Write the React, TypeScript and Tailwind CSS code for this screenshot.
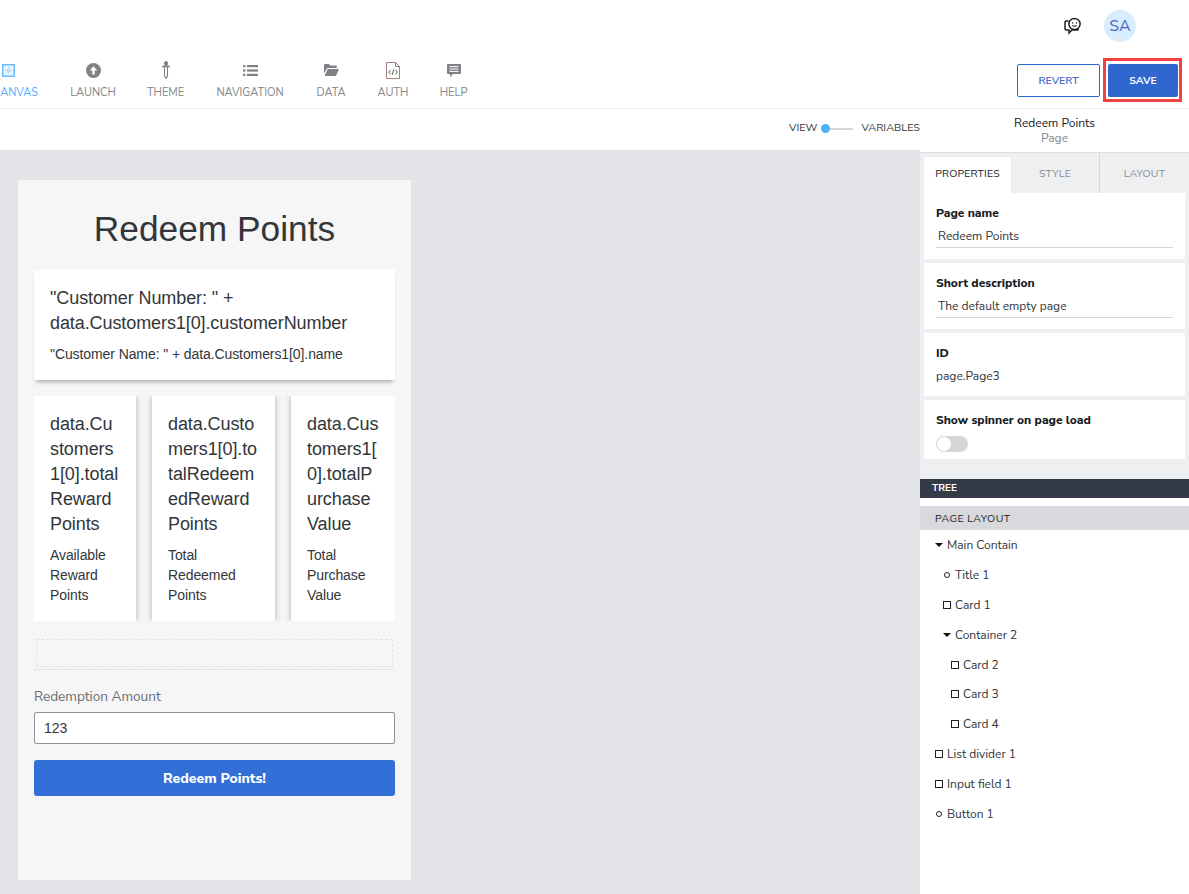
import type { ReactNode } from 'react'

const UI_FONT = "font-['Nunito_Sans','Open_Sans','Noto_Sans',sans-serif]"
const BODY_FONT = "font-['Liberation_Sans',Arial,sans-serif]"

function CanvasIcon() {
  return (
    <svg width="13" height="13" viewBox="0 0 13 13" fill="none" stroke="#6bbcf9">
      <rect x="0.75" y="0.75" width="11.5" height="11.5" strokeWidth="1.5" fill="#eaf6ff" />
      <path d="M6.5 3v1.5M6.5 8.5V10M3 6.5h1.5M8.5 6.5H10M5.5 5.5h2v2h-2z" strokeWidth="1" strokeDasharray="1 1" />
    </svg>
  )
}

function LaunchIcon() {
  return (
    <svg width="15" height="15" viewBox="0 0 16 16">
      <circle cx="8" cy="8" r="8" fill="#808186" />
      <path d="M8 3.5 12 8H9.3v4.2H6.7V8H4z" fill="#fff" />
    </svg>
  )
}

function ThemeIcon() {
  return (
    <svg width="10" height="18" viewBox="0 0 10 18" fill="none" stroke="#808186">
      <rect x="3.5" y="0.5" width="3" height="4" rx="1.5" fill="#808186" />
      <path d="M1 5.5h8" strokeWidth="1.6" />
      <path d="M3.5 6v9l1.5 2.4L6.5 15V6" strokeWidth="1.1" />
    </svg>
  )
}

function NavigationIcon() {
  return (
    <svg width="15" height="11" viewBox="0 0 15 11" fill="#808186">
      <rect x="0" y="0" width="2.4" height="2.2" />
      <rect x="4" y="0" width="11" height="2.2" />
      <rect x="0" y="4.4" width="2.4" height="2.2" />
      <rect x="4" y="4.4" width="11" height="2.2" />
      <rect x="0" y="8.8" width="2.4" height="2.2" />
      <rect x="4" y="8.8" width="11" height="2.2" />
    </svg>
  )
}

function DataIcon() {
  return (
    <svg width="15" height="12" viewBox="0 0 15 12" fill="#808186">
      <path d="M0 1.2C0 .5.5 0 1.2 0h3.6l1.4 1.6h5.6c.6 0 1 .4 1 1V4H3.2L0 9.5z" />
      <path d="M3.7 5H15l-2.7 6.2c-.1.5-.5.8-1 .8H.6z" />
    </svg>
  )
}

function AuthIcon() {
  return (
    <svg width="14" height="17" viewBox="0 0 14 17" fill="none">
      <path d="M.5.5h9l4 4v12H.5z" stroke="#a5807c" />
      <path d="M9.5.5v4h4" stroke="#a5807c" />
      <path d="M4.5 8 2.7 10.2l1.8 2.2M9.5 8l1.8 2.2-1.8 2.2M7.7 7.5l-1.4 5.4" stroke="#5f5f68" />
    </svg>
  )
}

function HelpIcon() {
  return (
    <svg width="14" height="13" viewBox="0 0 14 13">
      <path d="M1 0h12a1 1 0 0 1 1 1v8a1 1 0 0 1-1 1H6l-3 3v-3H1a1 1 0 0 1-1-1V1a1 1 0 0 1 1-1z" fill="#808186" />
      <path d="M2.5 2.6h9M2.5 5h9M2.5 7.4h9" stroke="#fff" strokeWidth="1" />
    </svg>
  )
}

function FeedbackIcon() {
  return (
    <svg width="18" height="18" viewBox="0 0 18 18" fill="none" stroke="#1f2026" strokeWidth="1.5">
      <circle cx="10.5" cy="7" r="5.6" />
      <path d="M4.5 4H2.2C1.5 4 1 4.5 1 5.2v6.6c0 .7.5 1.2 1.2 1.2H5v3l3-3h5c.8 0 1.3-.4 1.5-1" />
      <circle cx="8.6" cy="6" r=".7" fill="#1f2026" stroke="none" />
      <circle cx="12.4" cy="6" r=".7" fill="#1f2026" stroke="none" />
      <path d="M8.4 8.3c1 1.2 3.2 1.2 4.2 0" strokeWidth="1.1" />
    </svg>
  )
}

const NAV_ITEMS: { label: string; icon: ReactNode; width: string }[] = [
  { label: 'LAUNCH', icon: <LaunchIcon />, width: 'mr-[31px] w-[46px]' },
  { label: 'THEME', icon: <ThemeIcon />, width: 'mr-[32px] w-[37px]' },
  { label: 'NAVIGATION', icon: <NavigationIcon />, width: 'mr-[32px] w-[68px]' },
  { label: 'DATA', icon: <DataIcon />, width: 'mr-[32px] w-[30px]' },
  { label: 'AUTH', icon: <AuthIcon />, width: 'mr-[32px] w-[30px]' },
  { label: 'HELP', icon: <HelpIcon />, width: 'w-[27px]' },
]

function NavItem({ label, icon, width }: { label: string; icon: ReactNode; width: string }) {
  return (
    <div className={`flex flex-col items-center ${width}`}>
      <div className="flex h-[20px] items-center justify-center">{icon}</div>
      <span className="mt-[6px] whitespace-nowrap text-[11px] leading-[14px] text-[#83848c]">
        {label}
      </span>
    </div>
  )
}

function InfoCard({ value, label, width }: { value: string; label: string; width: string }) {
  return (
    <div className={`h-[225px] shrink-0 bg-white pb-[16px] pl-[16px] pr-[15px] pt-[16px] tracking-[-0.09px] shadow-[0_0_6px_rgba(0,0,0,0.3)] ${width}`}>
      <p className="text-[18px] leading-[25px] [overflow-wrap:anywhere] text-[#32363a]">{value}</p>
      <p className="mt-[8px] text-[14px] leading-[20px] text-[#32363a]">{label}</p>
    </div>
  )
}

function PropertyCard({ label, value, underline, height }: { label: string; value: string; underline?: boolean; height: string }) {
  return (
    <div className={`mx-[4px] mb-[4px] w-[261px] bg-white pl-[12px] pr-[12px] pt-[12px] ${height}`}>
      <p className="text-[12px] font-extrabold leading-[16px] text-[#1a1a1f]">{label}</p>
      <p className={`mt-[7px] text-[12px] leading-[17px] text-[#32363a] ${underline ? 'border-b border-[#d5d6da] pb-[2px] pl-[2px]' : ''}`}>
        {value}
      </p>
    </div>
  )
}

function TreeRow({ label, kind, indent }: { label: string; kind: 'open' | 'dot' | 'box'; indent: string }) {
  return (
    <div className={`flex h-[29.9px] items-center ${indent}`}>
      <span className="flex w-[12px] shrink-0 items-center justify-start">
        {kind === 'open' && (
          <span className="h-0 w-0 border-x-[4px] border-t-[4px] border-x-transparent border-t-[#111]" />
        )}
        {kind === 'dot' && <span className="ml-[1px] h-[6px] w-[6px] rounded-full border border-[#222]" />}
        {kind === 'box' && <span className="h-[8px] w-[8px] border border-[#222]" />}
      </span>
      <span className="text-[12px] leading-[16px] text-[#32363a]">{label}</span>
    </div>
  )
}

export default function App() {
  return (
    <div className={`flex h-[894px] w-[1189px] flex-col overflow-hidden bg-white ${UI_FONT}`}>
      {/* top strip with feedback + avatar */}
      <header className="flex h-[52px] shrink-0 items-start justify-end pr-[53px] pt-[10px]">
        <div className="mr-[22px] mt-[7px]">
          <FeedbackIcon />
        </div>
        <div className="flex h-[32px] w-[32px] items-center justify-center rounded-full bg-[#d8eeff] text-[16px] text-[#3f66c9]">
          SA
        </div>
      </header>

      {/* main toolbar */}
      <div className="flex h-[57px] shrink-0 items-start justify-between overflow-visible border-b border-[#f2f2f4]">
        <div className="flex items-start pt-[8px]">
          <div className="ml-[-13px] mr-[32px] flex w-[51px] flex-col items-center overflow-hidden">
            <div className="flex h-[20px] items-center self-start pl-[15px]">
              <CanvasIcon />
            </div>
            <span className="mt-[6px] self-end whitespace-nowrap text-[11px] leading-[14px] text-[#56b0f8]">
              ANVAS
            </span>
          </div>
          <div className="flex items-start">
            {NAV_ITEMS.map((item) => (
              <NavItem key={item.label} {...item} />
            ))}
          </div>
        </div>
        <div className="flex items-start pr-[7px] pt-[6px]">
          <button className="mr-[3px] mt-[6px] h-[33px] w-[83px] rounded-[2px] border border-[#3067cf] bg-white text-[10.5px] font-semibold text-[#3f66c9]">
            REVERT
          </button>
          <div className="border-[3px] border-[#f44040] pb-[2px] pl-[2px] pr-[1px] pt-[3px]">
            <button className="block h-[33px] w-[70px] rounded-[2px] bg-[#3067cf] text-[10.5px] font-bold text-white">
              SAVE
            </button>
          </div>
        </div>
      </div>

      <div className="flex min-h-0 flex-1">
        {/* left: view bar + canvas */}
        <div className="flex w-[920px] shrink-0 flex-col">
          <div className="flex h-[39px] shrink-0 items-center justify-end text-[10.8px] text-[#32363a]">
            <span>VIEW</span>
            <span className="ml-[4px] h-[9px] w-[9px] rounded-full bg-[#4fb0f7]" />
            <span className="h-[2px] w-[23px] bg-[#d5d6da]" />
            <span className="ml-[8px]">VARIABLES</span>
          </div>
          <main className={`mt-[2px] min-h-0 flex-1 bg-[#e2e4e8] pl-[18px] pt-[30px] ${BODY_FONT}`}>
            <div className="flex h-[700px] w-[393px] flex-col overflow-hidden bg-[#f6f6f6] px-[16px]">
              <h1 className="mt-[29px] text-center text-[35.3px] font-normal leading-[40px] text-[#32363a]">Redeem Points</h1>
              <div className="mt-[21px] h-[110px] w-[361px] shrink-0 bg-white px-[16px] pt-[16px] tracking-[-0.09px] shadow-[0_4px_4px_-2px_rgba(0,0,0,0.3)]">
                <p className="text-[18px] leading-[25px] text-[#32363a]">
                  "Customer Number: " +<br />
                  data.Customers1[0].customerNumber
                </p>
                <p className="mt-[8px] text-[14px] leading-[20px] text-[#32363a]">"Customer Name: " + data.Customers1[0].name</p>
              </div>
              <div className="mt-[16px] flex w-[361px] gap-[16px] overflow-hidden">
                <InfoCard width="w-[102px]" value="data.Customers1[0].totalRewardPoints" label="Available Reward Points" />
                <InfoCard width="w-[123px]" value="data.Customers1[0].totalRedeemedRewardPoints" label="Total Redeemed Points" />
                <InfoCard width="w-[104px]" value="data.Customers1[0].totalPurchaseValue" label="Total Purchase Value" />
              </div>
              <div className="mt-[18px] w-[361px] border-b border-[#dfe6ea] pb-[2px]">
                <div className="ml-[2px] h-[28px] w-[357px] border border-dashed border-[#d5e6ec]" />
              </div>
              <label className={`mt-[17px] text-[13.6px] leading-[20px] text-[#6a6d70] ${UI_FONT}`}>Redemption Amount</label>
              <div className="mt-[5px] flex h-[32px] w-[361px] shrink-0 items-center rounded-[2px] border border-[#89919a] bg-white pl-[9px] text-[14px] text-[#32363a]">
                123
              </div>
              <button className={`mt-[16px] h-[36px] w-[361px] shrink-0 rounded-[3px] bg-[#326fd6] text-[14px] font-extrabold text-white ${UI_FONT}`}>
                Redeem Points!
              </button>
            </div>
          </main>
        </div>

        {/* right: properties panel */}
        <aside className="flex w-[269px] shrink-0 flex-col">
          <div className="flex h-[43px] shrink-0 flex-col items-center pt-[7px] text-[12px] leading-[15px] text-[#1a1a1f]">
            <span>Redeem Points</span>
            <span className="text-[#85868c]">Page</span>
          </div>
          <div className="flex h-[327px] shrink-0 flex-col border-t border-[#dcdde0] bg-[#eeeff1]">
            <div className="flex h-[40px] shrink-0 items-end text-[10.5px] tracking-[0.2px]">
              <div className="ml-[4px] flex h-[36px] w-[87px] items-center justify-center rounded-t-[2px] bg-white pb-[2px] text-[#1a1a1f]">PROPERTIES</div>
              <div className="flex h-[40px] w-[89px] items-center justify-center border-r border-[#d5d6da] pt-[1px] text-[#8b8c92]">STYLE</div>
              <div className="flex h-[40px] flex-1 items-center justify-center pt-[1px] text-[#8b8c92]">LAYOUT</div>
            </div>
            <PropertyCard height="h-[66px]" label="Page name" value="Redeem Points" underline />
            <PropertyCard height="h-[66px]" label="Short description" value="The default empty page" underline />
            <PropertyCard height="h-[63px]" label="ID" value="page.Page3" />
            <div className="mx-[4px] h-[59px] w-[261px] bg-white pl-[12px] pt-[12px]">
              <p className="text-[12px] font-extrabold leading-[16px] text-[#1a1a1f]">Show spinner on page load</p>
              <div className="mt-[8px] flex h-[16px] w-[32px] items-center rounded-full bg-[#d5d6da] pl-[1px]">
                <span className="h-[14px] w-[14px] rounded-full bg-white" />
              </div>
            </div>
          </div>
          <div className="flex h-[19px] shrink-0 items-center bg-[#353a48] pl-[12px] text-[10px] font-bold text-white">TREE</div>
          <div className="mt-[8px] flex h-[24px] shrink-0 items-center bg-[#d8d9dc] pl-[15px] pt-[1px] text-[10.5px] tracking-[0.5px] text-[#1a1a1f]">
            PAGE LAYOUT
          </div>
          <div className="flex flex-col">
            <TreeRow label="Main Contain" kind="open" indent="pl-[15px]" />
            <TreeRow label="Title 1" kind="dot" indent="pl-[23px]" />
            <TreeRow label="Card 1" kind="box" indent="pl-[23px]" />
            <TreeRow label="Container 2" kind="open" indent="pl-[23px]" />
            <TreeRow label="Card 2" kind="box" indent="pl-[31px]" />
            <TreeRow label="Card 3" kind="box" indent="pl-[31px]" />
            <TreeRow label="Card 4" kind="box" indent="pl-[31px]" />
            <TreeRow label="List divider 1" kind="box" indent="pl-[15px]" />
            <TreeRow label="Input field 1" kind="box" indent="pl-[15px]" />
            <TreeRow label="Button 1" kind="dot" indent="pl-[15px]" />
          </div>
        </aside>
      </div>
    </div>
  )
}
